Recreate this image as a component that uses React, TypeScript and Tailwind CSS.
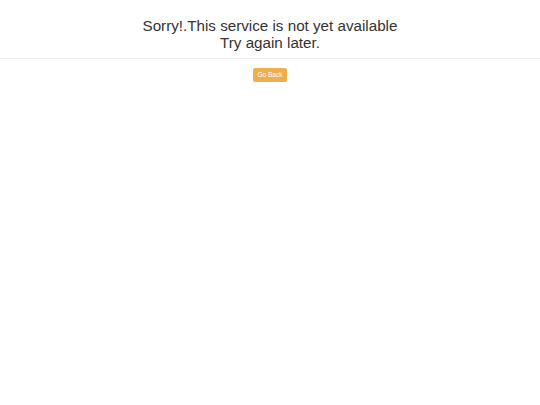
export default function App() {
  return (
    <div className="min-h-screen bg-white font-['Liberation_Sans',Arial,sans-serif] text-[#333]">
      <div className="pt-[17px] text-center text-[15.2px] leading-[17px]">
        <h1>Sorry!.This service is not yet available</h1>
        <h1>Try again later.</h1>
      </div>
      <hr className="mt-[7px] border-[#eee]" />
      <div className="mt-[9px] flex justify-center">
        <button className="h-[14px] w-[34px] rounded-[2px] bg-[#f0ad4e] text-[6.5px] leading-[14px] text-white">
          Go Back
        </button>
      </div>
    </div>
  )
}
